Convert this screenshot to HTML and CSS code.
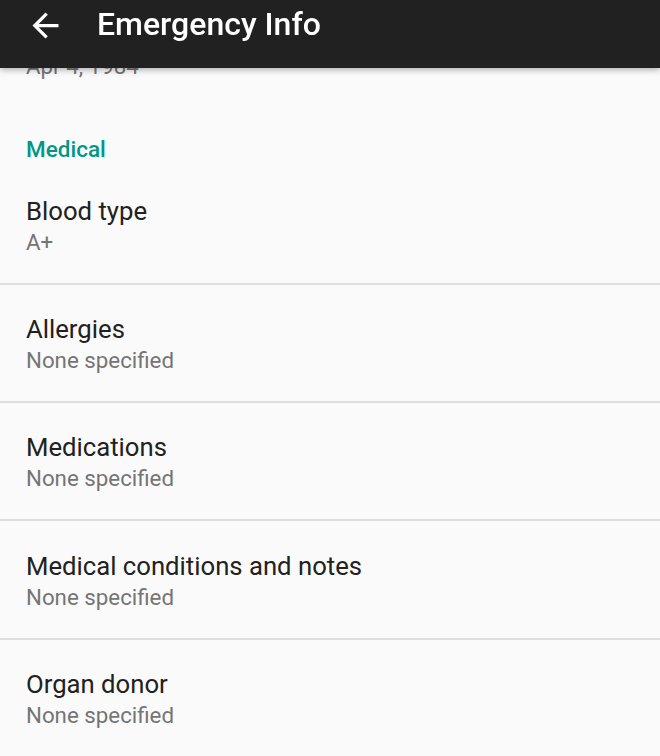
FILE: index.html
```html
<!DOCTYPE html>
<html>
<head>
<meta charset="utf-8">
<link rel="stylesheet" href="styles.css">
</head>
<body>
<header class="toolbar">
  <span class="back" aria-label="Back">
    <svg viewBox="0 0 24 24" width="39" height="39"><path fill="#fff" d="M20 11H7.83l5.59-5.59L12 4l-8 8 8 8 1.41-1.41L7.83 13H20v-2z"/></svg>
  </span>
  <h1 class="title">Emergency Info</h1>
</header>
<main class="content">
  <div class="row row-partial">
    <div class="row-sub">Apr 4, 1984</div>
  </div>
  <div class="section">Medical</div>
  <div class="row">
    <div class="row-title">Blood type</div>
    <div class="row-sub">A+</div>
  </div>
  <div class="row">
    <div class="row-title">Allergies</div>
    <div class="row-sub">None specified</div>
  </div>
  <div class="row">
    <div class="row-title">Medications</div>
    <div class="row-sub">None specified</div>
  </div>
  <div class="row">
    <div class="row-title">Medical conditions and notes</div>
    <div class="row-sub">None specified</div>
  </div>
  <div class="row">
    <div class="row-title">Organ donor</div>
    <div class="row-sub">None specified</div>
  </div>
</main>
</body>
</html>
```
FILE: styles.css
```css
html, body {
  margin: 0;
  padding: 0;
  background: #fafafa;
  font-family: Roboto, "Noto Sans", sans-serif;
  overflow: hidden;
  height: 756px;
}
.toolbar {
  position: fixed;
  top: 0;
  left: 0;
  right: 0;
  height: 68px;
  background: #212121;
  display: flex;
  align-items: flex-start;
  box-shadow: 0 2px 6px rgba(0,0,0,0.3);
  z-index: 2;
}
.back {
  display: flex;
  width: 39px;
  height: 39px;
  margin: 6px 0 0 26px;
}
.title {
  margin: 4px 0 0 32px;
  font-size: 32px;
  line-height: 40px;
  font-weight: 500;
  color: #fff;
}
.row {
  padding: 28.5px 26px 25.83px;
  border-bottom: 2px solid #dedede;
}
.row-partial {
  padding-top: 50.5px;
  border-bottom: none;
}
.row-title {
  font-size: 25.7px;
  line-height: 32px;
  color: #212121;
}
.row-sub {
  font-size: 22.3px;
  line-height: 30px;
  color: #757575;
}
.section {
  padding: 29px 26px 3px;
  font-size: 22.5px;
  line-height: 28px;
  font-weight: 500;
  color: #009688;
}
```
